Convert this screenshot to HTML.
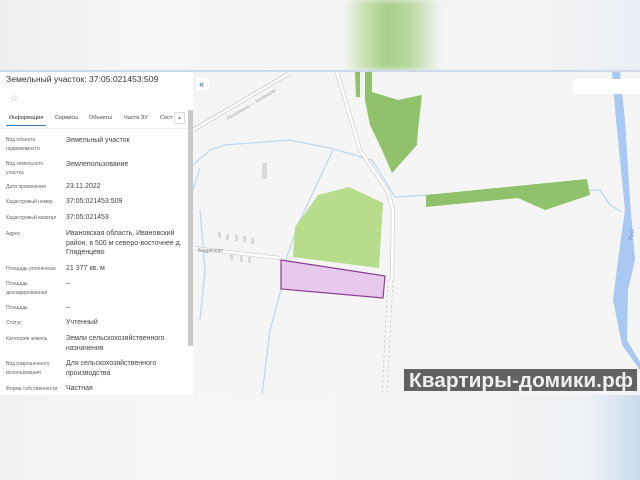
<!DOCTYPE html>
<html><head><meta charset="utf-8"><style>
*{margin:0;padding:0;box-sizing:border-box}
body{width:640px;height:480px;overflow:hidden;background:#f4f4f4;font-family:"Liberation Sans",sans-serif;position:relative}
.top{position:absolute;left:0;top:0;width:640px;height:70px;background:linear-gradient(90deg,#eeeeee 0%,#f6f6f6 20%,#f4f4f4 50%,#f3f3f3 85%,#e9eef6 100%)}
.gblur{position:absolute;left:345px;top:0;width:95px;height:70px;background:linear-gradient(90deg,rgba(243,243,243,0) 0%,#c7e0b0 20%,#a8cf88 45%,#b9d9a0 70%,rgba(243,243,243,0) 100%);filter:blur(3px)}
.bot{position:absolute;left:0;top:395px;width:640px;height:85px;background:linear-gradient(90deg,#f2f2f2 0%,#f7f7f7 30%,#f4f4f4 70%,#eef1f5 92%,#c9dcee 100%)}
.panel{position:absolute;left:0;top:71px;width:193px;height:324px;background:#fff;border-top:1px solid #c8d6ea}
.mapline{position:absolute;left:0;top:70px;width:640px;height:2px;background:#cdd8ea}
.t{position:absolute;white-space:nowrap;color:#333}
.l{position:absolute;left:6px;font-size:5px;color:#666;line-height:9px}
.v{position:absolute;left:66px;font-size:7px;color:#444;line-height:9.5px}
.sb{position:absolute;left:188px;top:110px;width:5px;height:236px;background:#c9c9c9}
</style></head><body>
<div class="top"></div><div class="gblur"></div>
<div class="bot"></div>
<svg style="position:absolute;left:193px;top:72px" width="447" height="323" viewBox="193 72 447 323">
<rect x="193" y="72" width="447" height="323" fill="#f5f5f5"/>
<g fill="none" stroke="#bcd6ee" stroke-width="1.2">
<path d="M193,165 L210,150 L225,145 L290,140 L330,148 L372,160 L395,197 L430,195 L600,190 L610,205 L622,212"/>
<path d="M193,190 L200,168"/>
<path d="M333,150 L300,220 L285,262 L281,290 L270,330 L262,395"/>
<path d="M200,210 L205,270 L200,320"/>
</g>
<g fill="none">
<path d="M193,130 L290,73" stroke="#c9c9c9" stroke-width="4"/>
<path d="M193,130 L290,73" stroke="#fff" stroke-width="2.5"/>
<path d="M337,72 L360,150 L388,192 L393,210 L392,278" stroke="#cfcfcf" stroke-width="4"/>
<path d="M337,72 L360,150 L388,192 L393,210 L392,278" stroke="#fff" stroke-width="2.6"/>
<path d="M193,248 L280,258" stroke="#d0d0d0" stroke-width="4"/>
<path d="M193,248 L280,258" stroke="#fff" stroke-width="2.6"/>
<path d="M388,280 L382,395 M393,280 L387,395" stroke="#c8c8c8" stroke-width="0.7" stroke-dasharray="3,2"/>
</g>
<g fill="#d9d9d9">
<rect x="262" y="163" width="5" height="16"/>
<rect x="218" y="232" width="3" height="6"/><rect x="226" y="234" width="3" height="6"/><rect x="235" y="235" width="3" height="6"/><rect x="243" y="236" width="3" height="6"/><rect x="251" y="238" width="3" height="6"/>
<rect x="230" y="254" width="3" height="6"/><rect x="240" y="256" width="3" height="6"/><rect x="248" y="257" width="3" height="6"/>
</g>
<text x="198" y="252" font-size="5" fill="#888" font-family="Liberation Sans">Бедрячево</text>
<text x="0" y="0" font-size="4.5" fill="#999" font-family="Liberation Sans" transform="translate(228,120) rotate(-31)">Песочнишко — Колбашово</text>
<polygon points="355,72 360,72 360,97 356,97" fill="#8fc26a"/>
<polygon points="365,72 372,72 372,92 398,100 422,95 418,130 417,145 392,173 382,150 370,125 365,100" fill="#8fc26a"/>
<polygon points="318,195 349,187 383,203 379,268 293,257 295,227" fill="#b6dc8c"/>
<polygon points="426,195 587,179 590,195 545,210 518,198 426,207" fill="#8fc26a"/>
<polygon points="281,260 385,276 383,298 281,289" fill="#e8c9ee" stroke="#8a3f8e" stroke-width="1.2"/>
<path d="M612,72 L620,72 L625,120 L630,200 L635,260 L628,290 L627,340 L640,362 L640,370 L622,345 L613,300 L618,260 L625,210 L616,120 Z" fill="#a9c9f2"/>
<text x="0" y="0" font-size="5" fill="#6a8fc0" font-family="Liberation Sans" transform="translate(632,240) rotate(-80)">Руза</text>
<rect x="196" y="77" width="14" height="14" fill="#fff" stroke="#e4e4e4" stroke-width="0.5"/>
<text x="199" y="87" font-size="9" fill="#4a7fc1" font-family="Liberation Sans" font-weight="bold">«</text>
<rect x="573" y="79" width="67" height="15" fill="#fff"/>
<rect x="404" y="369" width="233" height="22" fill="#5a5a5a" opacity="0.95"/>
<text x="409" y="387" font-size="20" font-weight="bold" fill="#f0f0f0" font-family="Liberation Sans,DejaVu Sans,sans-serif" textLength="224" lengthAdjust="spacingAndGlyphs">Квартиры-домики.рф</text>
</svg>
<div class="mapline"></div>
<div class="panel">
<div class="t" style="left:6px;top:2px;font-size:8.6px;color:#333">Земельный участок: 37:05:021453:509</div>
<div class="t" style="left:10px;top:21px;font-size:9px;color:#aaa">☆</div>
<div class="t" style="left:9px;top:43px;font-size:5.6px;color:#333">Информация</div>
<div style="position:absolute;left:6px;top:53px;width:40px;height:1px;background:#3c78c8"></div>
<div class="t" style="left:55px;top:43px;font-size:5.6px;color:#444">Сервисы</div>
<div class="t" style="left:89px;top:43px;font-size:5.6px;color:#444">Объекты</div>
<div class="t" style="left:124px;top:43px;font-size:5.6px;color:#444">Части ЗУ</div>
<div class="t" style="left:160px;top:43px;font-size:5.6px;color:#444">Сост</div>
<div style="position:absolute;left:174px;top:40px;width:11px;height:12px;background:#fff;border:1px solid #ddd;font-size:5px;text-align:center;line-height:10px;color:#666">▴</div>
<div style="position:absolute;left:0;top:56px;width:188px;height:1px;background:#eee"></div>
</div>
<div class="sb"></div>
<div class="l" style="top:136px">Вид объекта<br>недвижимости</div><div class="v" style="top:136px">Земельный участок</div>
<div class="l" style="top:160px">Вид земельного<br>участка</div><div class="v" style="top:160px">Землепользование</div>
<div class="l" style="top:183px">Дата присвоения</div><div class="v" style="top:182px">23.11.2022</div>
<div class="l" style="top:198px">Кадастровый номер</div><div class="v" style="top:197px">37:05:021453:509</div>
<div class="l" style="top:214px">Кадастровый квартал</div><div class="v" style="top:213px">37:05:021453</div>
<div class="l" style="top:230px">Адрес</div><div class="v" style="top:229px">Ивановская область, Ивановский<br>район, в 500 м северо-восточнее д.<br>Гляденцево</div>
<div class="l" style="top:265px">Площадь уточненная</div><div class="v" style="top:264px">21 377 кв. м</div>
<div class="l" style="top:280px">Площадь<br>декларированная</div><div class="v" style="top:279px">–</div>
<div class="l" style="top:304px">Площадь</div><div class="v" style="top:303px">–</div>
<div class="l" style="top:319px">Статус</div><div class="v" style="top:318px">Учтенный</div>
<div class="l" style="top:335px">Категория земель</div><div class="v" style="top:334px">Земли сельскохозяйственного<br>назначения</div>
<div class="l" style="top:360px">Вид разрешенного<br>использования</div><div class="v" style="top:359px">Для сельскохозяйственного<br>производства</div>
<div class="l" style="top:385px">Форма собственности</div><div class="v" style="top:384px">Частная</div>
</body></html>
